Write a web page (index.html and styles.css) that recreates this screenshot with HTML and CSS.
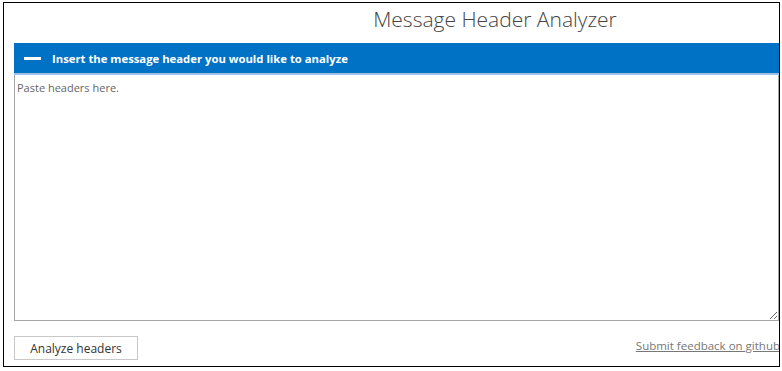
FILE: index.html
```html
<!DOCTYPE html>
<html lang="en">
<head>
    <meta charset="UTF-8" />
    <title>Message Header Analyzer</title>
    <link rel="stylesheet" href="styles.css">
</head>
<body>
<div class="frame">
  <div class="page">
    <h1 class="title">Message Header Analyzer</h1>

    <div class="section-bar">
      <span class="collapse-icon"></span>
      <span class="section-label">Insert the message header you would like to analyze</span>
    </div>
    <textarea class="headers-input" placeholder="Paste headers here."></textarea>

    <div class="footer">
      <button class="analyze-btn">Analyze headers</button>
      <a class="feedback-link" href="#">Submit feedback on github</a>
    </div>
  </div>
</div>
</body>
</html>
```

FILE: styles.css
```css
body {
  margin: 0;
  background: #ffffff;
  font-family: 'Open Sans', 'Noto Sans', sans-serif;
}
.frame {
  margin: 2px 0 0 3px;
  width: 777px;
  height: 365px;
  border: 1px solid #000;
  box-sizing: border-box;
  overflow: hidden;
}
.page {
  width: 962px;
  padding-left: 10px;
}
.title {
  margin: 0;
  height: 40px;
  text-align: center;
  font-size: 21px;
  font-weight: 300;
  line-height: 32px;
  color: #444;
}
.section-bar {
  display: flex;
  align-items: center;
  height: 30px;
  background: #0072c6;
  border-bottom: 2px solid #9cc3e6;
  color: #fff;
}
.collapse-icon {
  width: 17px;
  height: 3px;
  margin: 0 11px 0 10px;
  background: #fff;
}
.section-label {
  font-size: 11.3px;
  font-weight: 700;
}
.headers-input {
  display: block;
  width: 765px;
  height: 246px;
  margin: 0;
  padding: 5px 2px;
  box-sizing: border-box;
  border: 1px solid #a6a6a6;
  border-top: none;
  font-family: inherit;
  font-size: 11px;
  resize: both;
}
.headers-input::placeholder {
  color: #666;
}
.footer {
  display: flex;
  justify-content: space-between;
  align-items: center;
  width: 766px;
  margin-top: 15px;
}
.analyze-btn {
  width: 124px;
  height: 24px;
  background: #fff;
  border: 1px solid #c8c8c8;
  font-family: inherit;
  font-size: 12px;
  color: #333;
}
.feedback-link {
  margin-top: -6px;
  font-size: 11.5px;
  color: #777;
}
```
